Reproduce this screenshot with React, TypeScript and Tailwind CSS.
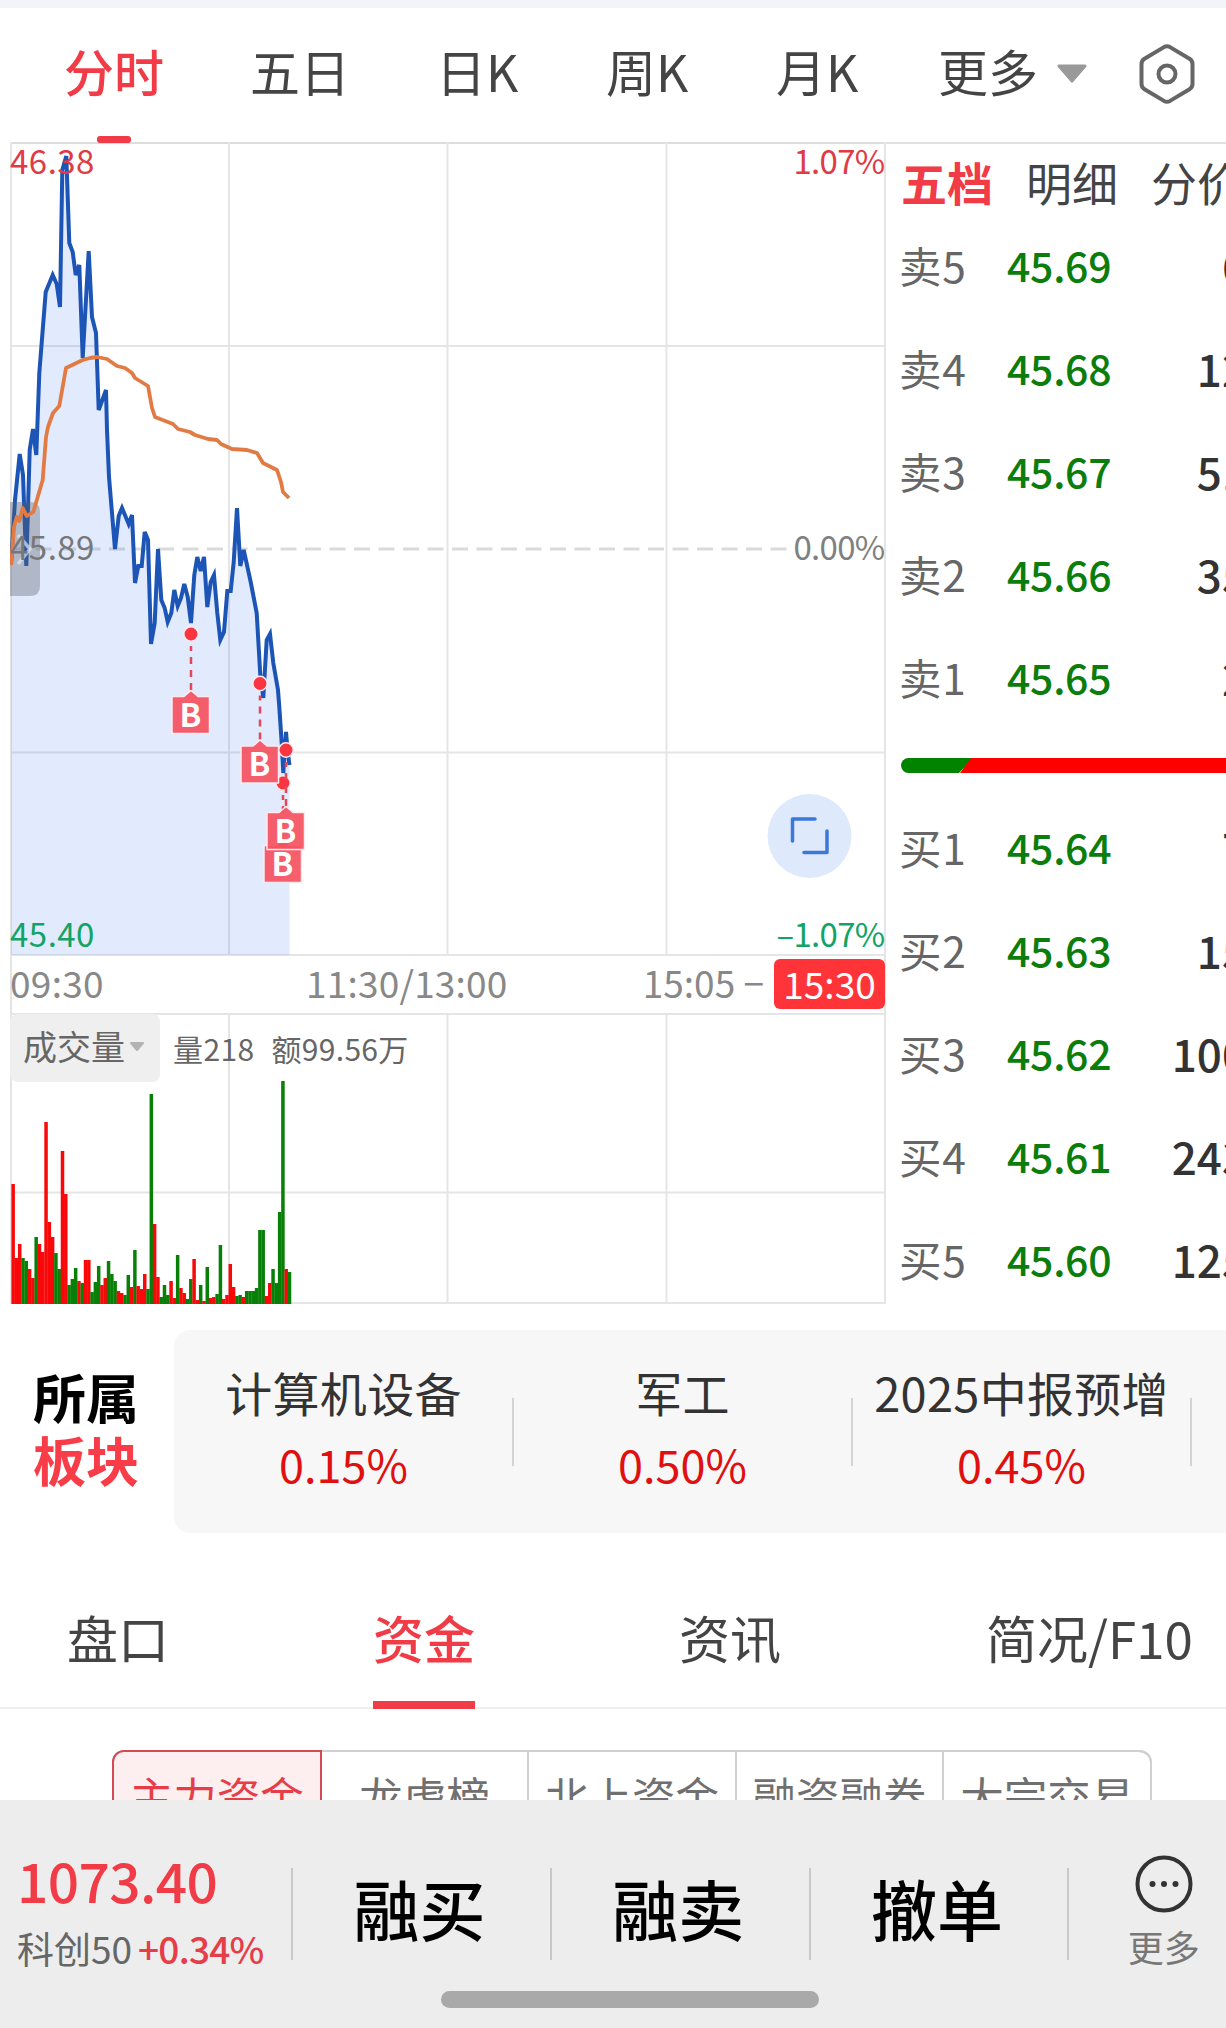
import { useState } from "react";
import clsx from "clsx";

interface Level {
  label: string;
  price: string;
  volume: string;
}

interface TradeMark {
  x: number;
  y: number;
}

const PERIODS = ["分时", "五日", "日K", "周K", "月K"];

const SELLS: Level[] = [
  { label: "卖5", price: "45.69", volume: "6" },
  { label: "卖4", price: "45.68", volume: "12" },
  { label: "卖3", price: "45.67", volume: "51" },
  { label: "卖2", price: "45.66", volume: "35" },
  { label: "卖1", price: "45.65", volume: "2" },
];

const BUYS: Level[] = [
  { label: "买1", price: "45.64", volume: "7" },
  { label: "买2", price: "45.63", volume: "15" },
  { label: "买3", price: "45.62", volume: "100" },
  { label: "买4", price: "45.61", volume: "243" },
  { label: "买5", price: "45.60", volume: "125" },
];

const SECTORS = [
  { name: "计算机设备", change: "0.15%" },
  { name: "军工", change: "0.50%" },
  { name: "2025中报预增", change: "0.45%" },
];

const FUND_TABS = ["主力资金", "龙虎榜", "北上资金", "融资融券", "大宗交易"];

const ACTIONS = ["融买", "融卖", "撤单"];

// Intraday price, in chart units
const PRICE_POINTS =
  "11,565 15,500 19.7,454 23,475 26.3,566 29.7,450 33,429 36.3,455 39.3,373 45.7,292 52.7,275 56.7,284 60,307 62.3,170 66.3,156 69.3,243 72.7,252 75.7,275 79.3,265 82.7,358 88.7,251 92,317 96,333 98.7,410 106,390 107,430 109,477 115,549 118.7,516 122,508 128.7,524 132,515 135,583 138.3,566 141.7,566 144.7,532 148,540 151,644 154.7,623 158,549 161.3,600 164.7,608 167.7,622 171.3,613 174.3,590 177.7,606 181,598 184.3,584 187.7,597 191,623 194.3,575 197.3,557 200.7,571 204,557 207.3,607 210.7,582 214,575 217.3,613 220.3,640 224,632 227.3,591 230.7,591 233.7,562 237,508 240.3,566 243.7,550 250.7,582 256.7,613 260.3,675 263.3,698 266.7,640 270,634 273.3,663 278,690 279.3,707 281.7,743 283.3,773 286,732 287.7,752 289.5,765";

// Volume-weighted average
const AVERAGE_POINTS =
  "11,565 14,527 16.7,517 19.3,521 22.7,508 26.7,516 33.3,512 42.7,480 46,437 48,427 53,413 59.3,406 66,368 82.7,360 90,358 97,357 107,359 117,366 125,368 132,373 135,378 148,386 152,408 155,417 173,424 178,429 190,432 195,435 208,439 217,440 221,444 232,449 247,450 257,453 263,463 277,470 281,482 283,492 289,498";

const MARKS: TradeMark[] = [
  { x: 283, y: 783 },
  { x: 260, y: 683.5 },
  { x: 191, y: 634 },
  { x: 286, y: 750 },
];

// One bar per minute: height followed by r (up) or g (down)
const VOLUME_BARS =
  "120r 46r 60r 46g 43g 35r 26r 67g 60r 52r 182r 82r 67r 51g 35g 153r 110r 19g 25g 36g 23r 21g 44r 44r 12g 22g 38g 19r 26r 43g 30g 23g 13r 11r 9g 29g 17r 54g 18r 15r 30r 15g 210g 80r 27r 7g 19g 9g 23r 6r 49g 16r 11r 5g 25g 45r 4r 19g 3r 37g 6r 7r 10g 59g 5r 9r 40r 17r 8g 9g 7r 13g 13g 13g 16g 74g 74g 8r 21r 35g 21g 92g 223g 35r 32g".split(
    " "
  );

export default function App() {
  const [period, setPeriod] = useState("分时");
  const [fundTab, setFundTab] = useState("主力资金");

  return (
    <div className="w-[1226px] h-[2028px] overflow-hidden bg-white font-['Noto_Sans_CJK_SC',sans-serif] text-[#444]">
      <div className="h-[1800px] overflow-hidden">
        <div className="h-2 bg-[#f3f4f9]" />

        {/* Chart period tabs */}
        <nav className="flex h-[134px] items-center gap-[86px] pl-16 pb-2.5 text-[50px] leading-none">
          {PERIODS.map((p) => (
            <button
              key={p}
              type="button"
              onClick={() => setPeriod(p)}
              className={clsx(
                "relative whitespace-nowrap text-left",
                p.endsWith("K") && "w-[84px]",
                p === period && "font-medium text-[#f13b46]"
              )}
            >
              {p}
              {p === period && (
                <span className="absolute left-[33px] top-[91px] z-10 h-[7px] w-[34px] rounded-[3px] bg-[#f13b46]" />
              )}
            </button>
          ))}
          <button type="button" className="-ml-2 flex items-center whitespace-nowrap">
            更多
            <svg className="ml-[18px] mt-2 h-5 w-8" viewBox="0 0 32 20">
              <path d="M3 2h26L16 17z" fill="#999" stroke="#999" strokeWidth="3" strokeLinejoin="round" />
            </svg>
          </button>
          <svg className="-ml-9 mt-2 h-[62px] w-[58px]" viewBox="0 0 58 62" fill="none" stroke="#666" strokeWidth="4">
            <path
              d="M26 4.100q3-1.600 6 0L51.500 15.800q3 1.800 3 5.200V41q0 3.400-3 5.200L32 57.900q-3 1.600-6 0L6.500 46.200q-3-1.800-3-5.200V21q0-3.400 3-5.200z"
              strokeLinejoin="round"
            />
            <circle cx="29" cy="31" r="8.500" />
          </svg>
        </nav>

        <div className="flex h-[1168px]">
          <div className="ml-2.5 w-[876px] shrink-0">
            <PriceChart />
            <div className="flex h-[57px] items-center border-x-2 border-[#e4e4e4] pb-1 text-[37px] text-[#888]">
              <span className="-ml-0.5 w-[296px] tracking-[0.3px]">09:30</span>
              <span className="tracking-[0.2px]">11:30/13:00</span>
              <span className="ml-auto">15:05 −</span>
              <span className="-mr-px ml-2.5 mt-0.5 flex h-[50px] w-[111px] items-center justify-center rounded-md bg-[#ff3439] text-white">
                15:30
              </span>
            </div>
            <VolumeChart />
          </div>
          <OrderBook />
        </div>

        {/* Related sectors */}
        <section className="mt-5 flex h-[203px]">
          <div className="flex w-[174px] shrink-0 flex-col justify-center pb-2 pl-[33px] text-[53px] font-bold leading-[63px] text-black">
            <span>所属</span>
            <span className="text-[#f83d49]">板块</span>
          </div>
          <div className="flex flex-1 items-center rounded-l-2xl bg-[#f7f7f7] pl-px">
            {SECTORS.map((s) => (
              <div
                key={s.name}
                className="flex h-[68px] w-[339px] shrink-0 flex-col items-center justify-center whitespace-nowrap border-r-2 border-[#d3d3d3]"
              >
                <span className="-mt-2 text-[47px] leading-[72px] tracking-[0.3px] text-[#333]">{s.name}</span>
                <span className="text-[45px] leading-[72px] text-[#e00f10]">{s.change}</span>
              </div>
            ))}
          </div>
        </section>

        {/* Detail tabs */}
        <nav className="mt-[68px] flex h-[108px] border-b-2 border-[#eee] text-[51px] leading-[72px]">
          <span className="w-[306px] pl-[67px]">盘口</span>
          <span className="w-[306px] pl-[67px] text-[#f13b46]">
            <span className="flex h-[108px] w-[102px] flex-col justify-between font-medium">
              资金
              <span className="h-2 bg-[#f13b46]" />
            </span>
          </span>
          <span className="w-[306px] pl-[67px]">资讯</span>
          <span className="whitespace-nowrap pl-[68px]">简况/F10</span>
        </nav>

        <div className="ml-28 mt-[41px] flex h-[90px] w-[1040px] rounded-xl border-2 border-[#d0d0d0] text-[43.500px] leading-[88px] text-[#707070]">
          {FUND_TABS.map((t) => (
            <button
              key={t}
              type="button"
              onClick={() => setFundTab(t)}
              className={clsx(
                "-mt-0.5 h-[90px] flex-1 whitespace-nowrap border-t-2 text-center",
                t === fundTab
                  ? "-ml-0.5 rounded-l-xl border-2 border-[#d44a54] bg-[#fdeff0] text-[#e63e48]"
                  : "border-r-2 border-[#d0d0d0] last:rounded-r-xl last:border-r-0"
              )}
            >
              {t}
            </button>
          ))}
        </div>
      </div>

      <BottomBar />
    </div>
  );
}

function PriceChart() {
  return (
    <svg className="block h-[814px] w-[876px]" viewBox="10 142 876 814">
      {/* Grid */}
      <g stroke="#e5e5e5" strokeWidth="2">
        <path d="M10 142.500H886" stroke="#dcdedd" strokeWidth="3" />
        <path d="M11 142V956M229 142V956M447.500 142V956M666.500 142V956M885 142V956" />
        <path d="M10 346H886M10 752.500H886M10 955H886" />
      </g>
      <path d="M11 549H792" stroke="#dadada" strokeWidth="3" strokeDasharray="16 8.500" />

      <polygon points={`11,955 ${PRICE_POINTS} 289.5,955`} fill="#2f6bee" fillOpacity="0.14" />
      <polyline points={PRICE_POINTS} fill="none" stroke="#1c55b5" strokeWidth="4" />

      {/* Drawer handle */}
      <path d="M10 502H30q10 0 10 10V586q0 10-10 10H10z" fill="#5a6069" fillOpacity="0.36" />
      <path d="M18 535L30 549L18 564" fill="none" stroke="#dfe5f2" strokeOpacity="0.7" strokeWidth="3.500" />
      <polyline points={AVERAGE_POINTS} fill="none" stroke="#e27a44" strokeWidth="3.800" strokeLinejoin="round" />

      <g fontSize="33" letterSpacing="0.500">
        <text x="10" y="174" fill="#e03a47">46.38</text>
        <text x="10" y="560" fill="#777">45.89</text>
        <text x="10" y="947" fill="#12a366">45.40</text>
      </g>
      <g fontSize="33" letterSpacing="-0.700" textAnchor="end">
        <text x="884.500" y="174" fill="#e03a47">1.07%</text>
        <text x="884.500" y="560" fill="#808080">0.00%</text>
        <text x="884.500" y="947" fill="#12a366">–1.07%</text>
      </g>

      {MARKS.map((m) => (
        <BuyMark key={m.x} {...m} />
      ))}

      {/* Fullscreen button */}
      <circle cx="809.500" cy="836" r="42" fill="#dfe9fc" />
      <path
        d="M792.500 841V819H815M804 852.500H827V831"
        fill="none"
        stroke="#3c78d8"
        strokeWidth="3.500"
        strokeLinecap="round"
        strokeLinejoin="round"
      />
    </svg>
  );
}

function BuyMark({ x, y }: TradeMark) {
  return (
    <g transform={`translate(${x} ${y})`}>
      <path d="M0 12V56" stroke="#e4465a" strokeWidth="2.500" strokeDasharray="7 6" strokeDashoffset="2" />
      <path
        d="M-19 62.500H-7L0 56.500L7 62.500H18.500V99.500H-19z"
        fill="#f5515f"
        fillOpacity="0.92"
        stroke="#fdeaf0"
        strokeWidth="1.500"
        strokeLinejoin="round"
      />
      <text x="-0.500" y="92.500" textAnchor="middle" fontSize="32" fontWeight="700" fill="#fff">
        B
      </text>
      <circle r="7.200" fill="#f93540" stroke="#fdeaf0" strokeWidth="1.500" />
    </g>
  );
}

function VolumeChart() {
  return (
    <div className="relative h-[291px]">
      <svg className="block h-[291px] w-[876px]" viewBox="10 1013 876 291">
        <g stroke="#e5e5e5" strokeWidth="2">
          <path d="M10 1014H886M10 1192.500H886M10 1303H886" />
          <path d="M11 1013V1304M229 1013V1304M447.500 1013V1304M666.500 1013V1304M885 1013V1304" />
        </g>
        {VOLUME_BARS.map((bar, i) => {
          const h = parseInt(bar, 10);
          return (
            <rect
              key={i}
              x={11.4 + i * 3.29}
              y={1304 - h}
              width={3.5}
              height={h}
              fill={bar.endsWith("r") ? "#f80808" : "#088008"}
            />
          );
        })}
      </svg>
      <div className="absolute left-0 top-px flex items-center whitespace-nowrap text-[#666]">
        <button type="button" className="flex h-[68px] w-[150px] items-center rounded-lg bg-[#efefef] pb-1.5 pl-[13px] text-[34px]">
          成交量
          <svg className="ml-1 mt-1 h-3 w-4" viewBox="0 0 16 12">
            <path d="M2 2h12L8 9z" fill="#b3b3b3" stroke="#b3b3b3" strokeWidth="2" strokeLinejoin="round" />
          </svg>
        </button>
        <span className="ml-[13px] text-[30px] tracking-[0.4px]">量218</span>
        <span className="ml-[17px] text-[30px] tracking-[0.3px]">额99.56万</span>
      </div>
    </div>
  );
}

function OrderBook() {
  return (
    <aside className="w-[340px] overflow-hidden border-t-2 border-[#e0e0e0] pl-[13px]">
      <div className="flex h-[71px] w-[360px] items-center gap-[33px] whitespace-nowrap pl-0.5 pt-1 text-[46px]">
        <span className="font-bold text-[#f13b46]">五档</span>
        <span>明细</span>
        <span>分价</span>
      </div>
      <Levels levels={SELLS} />
      <svg className="mb-6 ml-0.5 mt-7 block h-[15px] w-[325px]" viewBox="0 0 325 15">
        <path d="M7.500 0H72L58 15H7.500A7.500 7.500 0 0 1 7.500 0z" fill="#008400" />
        <path d="M70 0H325V15H59z" fill="#f00" />
      </svg>
      <Levels levels={BUYS} />
    </aside>
  );
}

function Levels({ levels }: { levels: Level[] }) {
  return (
    <ul className="w-[348px]">
      {levels.map((l) => (
        <li key={l.label} className="grid h-[103px] grid-cols-[108px_1fr_auto] items-center pb-[3px]">
          <span className="text-[42.500px] tracking-[0.8px] text-[#666]">{l.label}</span>
          <span className="text-[41px] font-medium tracking-[-0.3px] text-[#0b7d0b]">{l.price}</span>
          <span className="text-[44px] font-medium text-[#333]">{l.volume}</span>
        </li>
      ))}
    </ul>
  );
}

function BottomBar() {
  return (
    <footer className="relative flex h-[228px] bg-[#ededed] pt-[68px]">
      <div className="flex h-[92px] w-[291px] flex-col justify-center whitespace-nowrap pb-0.5 pl-[17px]">
        <span className="text-[55px] font-medium leading-[70px] tracking-[-0.6px] text-[#f13b46]">1073.40</span>
        <span className="text-[37px] leading-[68px] text-[#666]">
          科创50<span className="ml-1.5 font-medium tracking-[-0.8px] text-[#e63e48]">+0.34%</span>
        </span>
      </div>
      {ACTIONS.map((a) => (
        <button
          key={a}
          type="button"
          className="flex h-[92px] w-[258.800px] items-center justify-center border-l-2 border-[#c8c8c8] pb-3.5 pr-1 text-[66px] font-medium text-black"
        >
          {a}
        </button>
      ))}
      <div className="h-[92px] w-0.5 bg-[#c8c8c8]" />
      <button type="button" className="-mt-3.5 flex flex-1 flex-col items-center pl-8 text-[36px] leading-[52px] text-[#777]">
        <svg className="h-[60px] w-[60px] shrink-0" viewBox="0 0 60 60">
          <circle cx="30" cy="30" r="26.500" fill="none" stroke="#333" strokeWidth="4" />
          <g fill="#333">
            <circle cx="18.500" cy="30" r="3" />
            <circle cx="30" cy="30" r="3" />
            <circle cx="41.500" cy="30" r="3" />
          </g>
        </svg>
        <span className="mt-1.5">更多</span>
      </button>
      <div className="absolute bottom-5 left-[441px] h-[17px] w-[378px] rounded-full bg-[#a9a9a9]" />
    </footer>
  );
}
